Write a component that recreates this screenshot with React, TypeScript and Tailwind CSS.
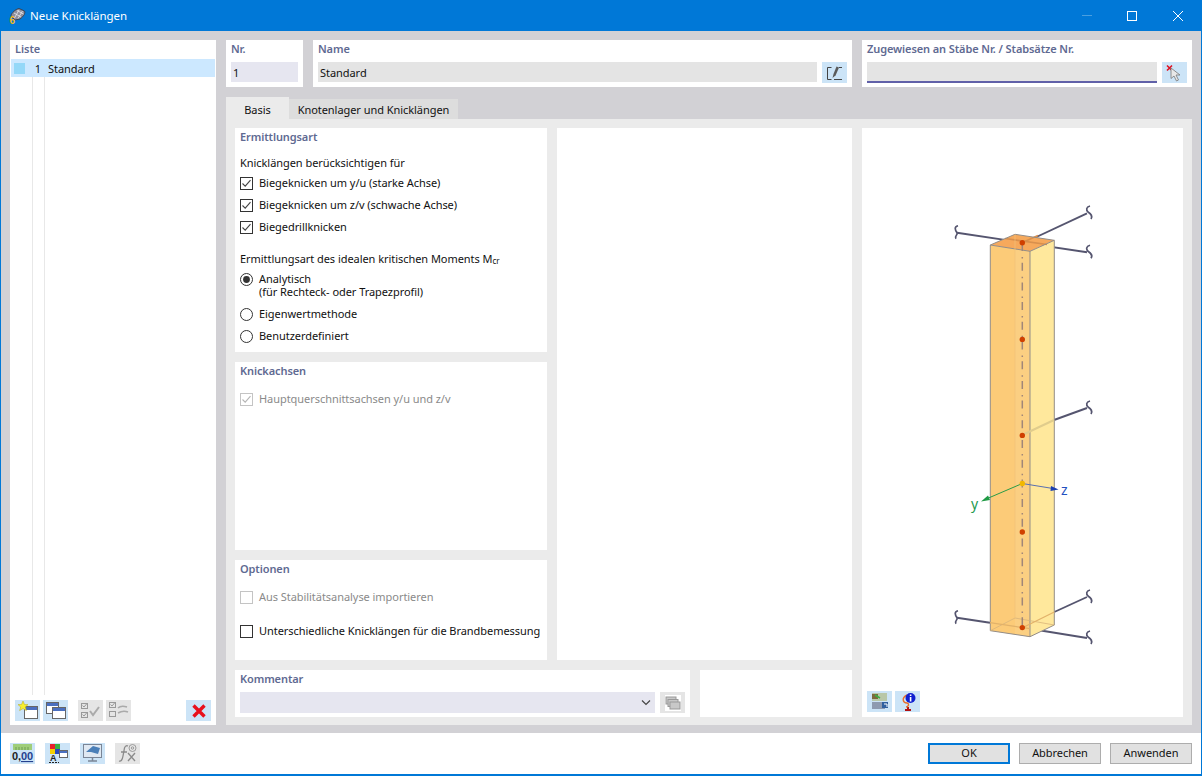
import React from "react";

const font = "font-['Noto_Sans',sans-serif]";

const IconBtn = ({ children, off, className = "" }: { children?: React.ReactNode; off?: boolean; className?: string }) => (
  <div className={`w-[25px] h-[21px] flex items-center justify-center shrink-0 ${off ? "bg-[#e5e5e5]" : "bg-[#cce4f7]"} ${className}`}>
    {children}
  </div>
);

const Title = ({ children }: { children: React.ReactNode }) => (
  <div className="h-[18px] flex items-center px-[5px] font-semibold text-[#5f6a92] whitespace-nowrap tracking-[-0.1px]">{children}</div>
);

const Box = ({ checked, off }: { checked?: boolean; off?: boolean }) => (
  <svg width="13" height="13" viewBox="0 0 13 13" className="shrink-0">
    <rect x="0.5" y="0.5" width="12" height="12" fill="#fff" stroke={off ? "#c4c4c4" : "#333"} />
    {checked && <path d="M2.5 6.5 L5.2 9.2 L10.5 3.2" fill="none" stroke={off ? "#b5b5b5" : "#444"} strokeWidth="1.1" />}
  </svg>
);

const Radio = ({ checked }: { checked?: boolean }) => (
  <svg width="13" height="13" viewBox="0 0 13 13" className="shrink-0">
    <circle cx="6.5" cy="6.5" r="6" fill="#fff" stroke="#333" />
    {checked && <circle cx="6.5" cy="6.5" r="3.4" fill="#333" />}
  </svg>
);

const Row = ({ children, box, off, className = "" }: { children: React.ReactNode; box: React.ReactNode; off?: boolean; className?: string }) => (
  <div className={`h-[22px] flex items-center gap-[6px] pl-[5px] ${off ? "text-[#8a8a8a]" : "text-[#111]"} ${className}`}>
    {box}
    <span className="whitespace-nowrap">{children}</span>
  </div>
);

const NewIcon = () => (
  <svg width="22" height="19" viewBox="0 0 22 19">
    <rect x="7.5" y="5.5" width="13" height="12" fill="#fff" stroke="#666" />
    <rect x="8" y="6" width="12" height="3" fill="#4a6fc0" />
    <path d="M6 0 L7.5 3.5 L11 3.6 L8.3 6 L9.4 9.6 L6 7.6 L2.6 9.6 L3.7 6 L1 3.6 L4.5 3.5Z" fill="#f7ee2e" stroke="#b5a820" strokeWidth="0.5" />
  </svg>
);
const CopyIcon = () => (
  <svg width="22" height="19" viewBox="0 0 22 19">
    <rect x="1.5" y="1.5" width="12" height="11" fill="#fff" stroke="#666" />
    <rect x="2" y="2" width="11" height="3" fill="#4a6fc0" />
    <rect x="7.5" y="6.5" width="13" height="11" fill="#fff" stroke="#666" />
    <rect x="8" y="7" width="12" height="3" fill="#4a6fc0" />
  </svg>
);
const CheckAllIcon = () => (
  <svg width="22" height="19" viewBox="0 0 22 19" fill="none" stroke="#999">
    <rect x="1.5" y="2.5" width="6" height="5" />
    <rect x="1.5" y="11.5" width="6" height="5" />
    <path d="M2.5 4.5 L4 6 L7 2.5 M2.5 13.5 L4 15 L7 11.5" />
    <path d="M10 10 L13 14 L19 6" strokeWidth="2" stroke="#aaa" />
  </svg>
);
const CheckSwapIcon = () => (
  <svg width="22" height="19" viewBox="0 0 22 19" fill="none" stroke="#999">
    <rect x="1.5" y="1.5" width="6" height="5" />
    <rect x="1.5" y="10.5" width="6" height="5" />
    <path d="M2.5 3.5 L4 5 L7 1.5" />
    <path d="M10 7 Q13 4 19 6 M10 12 Q15 9 20 11" strokeWidth="1.6" stroke="#aaa" />
  </svg>
);
const DeleteIcon = () => (
  <svg width="16" height="16" viewBox="0 0 16 16">
    <path d="M2.5 2.5 L13.5 13.5 M13.5 2.5 L2.5 13.5" stroke="#e8101c" strokeWidth="3.4" />
  </svg>
);
const EditIcon = () => (
  <svg width="18" height="16" viewBox="0 0 18 16" fill="none">
    <path d="M5.5 2.5 H1.5 V14.5 H5.5 M8 14.5 H16" stroke="#444" strokeWidth="1" />
    <path d="M13 2.5 H16" stroke="#444" strokeWidth="1" />
    <path d="M6.5 13 L7.5 9 L10.5 1.5 L13 2.5 L9.5 10.5Z" fill="#5a5a5a" />
  </svg>
);
const PickIcon = () => (
  <svg width="18" height="18" viewBox="0 0 18 18">
    <path d="M1 1.5 L6 6.5 M6 1.5 L1 6.5" stroke="#e01020" strokeWidth="1.6" />
    <path d="M5 4 L5 14.5 L8 12 L10.5 17 L12.5 16 L10 11 L14 11Z" fill="#e8e8e8" stroke="#777" strokeWidth="0.8" />
  </svg>
);
const UnitsIcon = () => (
  <svg width="23" height="20" viewBox="0 0 23 20">
    <rect x="2" y="1" width="19" height="6" fill="#9fce7a" />
    <path d="M5 4V7 M8 4V7 M11 4V7 M14 4V7 M17 4V7" stroke="#6e9e52" />
    <text x="1" y="17" fontSize="11" fontWeight="700" fontFamily="Liberation Sans" fill="#222">0,</text>
    <text x="10" y="17" fontSize="11" fontWeight="700" fontFamily="Liberation Sans" fill="#24418f" textDecoration="underline">00</text>
  </svg>
);
const ColorsIcon = () => (
  <svg width="23" height="20" viewBox="0 0 23 20">
    <rect x="4" y="1" width="5" height="5" fill="#e8202c" />
    <rect x="9" y="1" width="5" height="5" fill="#3cb043" />
    <rect x="4" y="6" width="5" height="5" fill="#f5d000" />
    <rect x="9" y="6" width="5" height="5" fill="#2848c0" />
    <rect x="13.5" y="7.5" width="8" height="7" fill="#fff" stroke="#666" />
    <rect x="14" y="8" width="7" height="2" fill="#4a6fc0" />
    <text x="4" y="18" fontSize="9" fontWeight="700" fontFamily="Liberation Sans" fill="#222">A</text>
    <path d="M3 19.5 H13" stroke="#222" strokeDasharray="2 1" />
  </svg>
);
const ScreenIcon = () => (
  <svg width="23" height="20" viewBox="0 0 23 20">
    <rect x="2.5" y="1.5" width="18" height="13" fill="#dfe8f2" stroke="#7a8596" />
    <path d="M5 9 L12 3 L19 5 L17 11 L10 9Z" fill="#4a7fb8" />
    <path d="M11.5 14.5 V17.5 M7 18 H16" stroke="#7a8596" strokeWidth="1.5" />
  </svg>
);
const FxIcon = () => (
  <svg width="23" height="20" viewBox="0 0 23 20" fill="none" stroke="#8a8a8a">
    <path d="M3 18 Q6 19 7 13 L8.5 5 Q9.5 2 12 3 M5 9 H11" strokeWidth="1.3" />
    <path d="M12 10 L19 18 M19 10 L12 18" strokeWidth="1.3" />
    <circle cx="16.5" cy="5" r="3.5" strokeWidth="0.8" />
    <circle cx="16.5" cy="5" r="1.2" strokeWidth="0.8" />
  </svg>
);
const ViewIcon = () => (
  <svg width="22" height="19" viewBox="0 0 22 19">
    <rect x="3" y="1" width="15" height="8" fill="#b9c7a8" />
    <rect x="3" y="2" width="6" height="5" fill="#7c6a3c" />
    <path d="M6 3 L11 6" stroke="#3cb043" strokeWidth="1.5" />
    <rect x="3" y="10" width="13" height="7" fill="#8e9ab0" />
    <rect x="13" y="10" width="6" height="6" fill="#2f5f9e" />
    <path d="M15 12 H18 V15" stroke="#fff" fill="none" />
  </svg>
);
const InfoIcon = () => (
  <svg width="22" height="19" viewBox="0 0 22 19">
    <path d="M8 18 H14 M11 18 V15" stroke="#b01010" strokeWidth="2" />
    <path d="M10 3 C4 6 6 11 10 11 C13 12 11 15 9 15" fill="none" stroke="#e8702c" strokeWidth="1.4" />
    <circle cx="13.5" cy="6" r="5" fill="#1020d0" />
    <rect x="12.8" y="2.5" width="1.6" height="1.5" fill="#fff" />
    <rect x="12.8" y="5" width="1.6" height="4.5" fill="#fff" />
  </svg>
);
const AppIcon = () => (
  <svg width="17" height="16" viewBox="0 0 17 16">
    <path d="M2 8 C2 5 7 1 10 0.5 L15.5 3 C16.5 5 15 8 11 11 L6 12Z" fill="#8f8f9c" stroke="#33333d" strokeWidth="0.8" />
    <path d="M5 5 L12 9 M8 2.5 L14.5 6 M5.5 10 L10 2 M9 10.5 L13.5 3" stroke="#e8e8ee" strokeWidth="0.8" />
    <text x="0.5" y="15.5" fontSize="10" fontWeight="700" fontFamily="Liberation Sans" fill="#f0b820">6</text>
  </svg>
);

const BraceRight = ({ x, y }: { x: number; y: number }) => (
  <path
    d={`M${x + 3} ${y - 7} C${x - 1} ${y - 6} ${x - 1} ${y - 3} ${x + 1} ${y - 1} C${x + 4} ${y + 1} ${x + 6} ${y + 3} ${x + 4} ${y + 6}`}
    fill="none"
    stroke="#55556f"
    strokeWidth="1.7"
  />
);
const BraceLeft = ({ x, y }: { x: number; y: number }) => (
  <path
    d={`M${x + 1} ${y - 7} C${x - 3} ${y - 6} ${x - 2} ${y - 3} ${x} ${y} C${x + 1} ${y + 3} ${x - 3} ${y + 3} ${x - 1} ${y + 6}`}
    fill="none"
    stroke="#55556f"
    strokeWidth="1.7"
  />
);

const ColumnFigure = () => (
  <svg width="321" height="560" viewBox="862 128 321 560" className="block">
    {/* auflager hinten */}
    <path d="M1030 240 L1087 213.3" stroke="#55556f" strokeWidth="1.9" />
    <BraceRight x={1087} y={213} />
    <path d="M957 232.7 L1087 252.3" stroke="#55556f" strokeWidth="1.9" />
    <BraceLeft x={957} y={232.7} />
    <BraceRight x={1087} y={252.3} />
    <path d="M1054 420 L1087 408" stroke="#55556f" strokeWidth="1.9" />
    <BraceRight x={1087} y={408} />
    <path d="M1054.3 612 L1087 597" stroke="#55556f" strokeWidth="1.9" />
    <BraceRight x={1087} y={597} />
    <path d="M957 617.7 L990 622.7 M1030 628.7 L1087 638" stroke="#55556f" strokeWidth="1.9" />
    <BraceLeft x={957} y={617.7} />
    <BraceRight x={1087} y={638} />
    {/* stab */}
    <path d="M990.3 245 L1030 251.3 V636.7 L990.3 630.7Z" fill="#fccb78" />
    <path d="M1015 248 L1030 251.3 V636.7 L1015 634Z" fill="#fbcf82" />
    <path d="M1030 251.3 L1054.3 240.3 V625 L1030 636.7Z" fill="#ffe89c" />
    <path d="M990.3 245 L1015 234.3 L1054.3 240.3 L1030 251.3Z" fill="#f6a95c" />
    <path d="M1005 238.5 L1047 244.5 M1022 242.7 L1038 235.5" stroke="#d8904e" strokeWidth="1.6" />
    <path d="M990.3 245 L1015 234.3 L1054.3 240.3 L1030 251.3Z M990.3 245 V630.7 L1030 636.7 L1054.3 625 V240.3 M1030 251.3 V636.7" fill="none" stroke="#938d88" strokeWidth="1" />
    <path d="M990.3 630.7 L1015 618 L1054.3 625" fill="none" stroke="#d8b47a" strokeWidth="0.8" />
    <path d="M1015 234.3 V618" stroke="#f0c078" strokeWidth="0.7" />
    <path d="M1022.3 435 L1054 420" stroke="#e0cc8c" strokeWidth="2" />
    <path d="M990 622.7 L1030 628.7 M1022 628 L1054.3 612" stroke="#e2b26a" strokeWidth="1.3" />
    <path d="M1022.3 243 V628" stroke="#a08678" strokeWidth="1.5" strokeDasharray="8 6 1.5 4.2" />
    <circle cx="1022.3" cy="242.7" r="2.7" fill="#d04000" />
    <circle cx="1022.3" cy="339.4" r="2.7" fill="#d04000" />
    <circle cx="1022.3" cy="435.4" r="2.7" fill="#d04000" />
    <circle cx="1022.3" cy="532" r="2.7" fill="#d04000" />
    <circle cx="1022.3" cy="627.6" r="2.7" fill="#d04000" />
    {/* achsen */}
    <path d="M1022.3 483.5 L985 499.5" stroke="#2a9c48" strokeWidth="1" />
    <path d="M981 501.5 L988 495.5 L990 500Z" fill="#1f9a44" />
    <path d="M1022.3 483.5 L1053 488.5" stroke="#5a70b0" strokeWidth="1" />
    <path d="M1058.5 489.5 L1051 486 L1050.5 491Z" fill="#1a3fb0" />
    <circle cx="1022.3" cy="483.5" r="2.7" fill="#f2b800" />
    <text x="971" y="509" fontSize="14" fill="#1f9a50" fontFamily="Noto Sans">y</text>
    <text x="1061" y="495" fontSize="14" fill="#2250c0" fontFamily="Noto Sans">z</text>
  </svg>
);

const App = () => {
  return (
    <div className={`${font} w-[1202px] h-[776px] flex flex-col bg-white border border-t-0 border-[#0078d7] border-b-2 text-[11px] tracking-[-0.05px] text-[#111] overflow-hidden`}>
      <div className="h-[31px] bg-[#0078d7] flex items-center -mx-px shrink-0">
        <div className="ml-[9px] mr-[4px]"><AppIcon /></div>
        <span className="text-white text-[11.5px]">Neue Knicklängen</span>
        <div className="ml-auto flex items-center">
          <div className="w-[10px] h-px bg-[#4a9fe0] mr-[35px]" />
          <div className="w-[10px] h-[10px] border border-white mr-[36px]" />
          <svg width="10" height="10" viewBox="0 0 10 10" className="mr-[19px]">
            <path d="M0 0 L10 10 M10 0 L0 10" stroke="#fff" strokeWidth="1" />
          </svg>
        </div>
      </div>

      <div className="h-[702px] bg-[#d2d1d5] flex gap-[10px] pt-[9px] pl-[9px] pr-[9px] shrink-0">
        {/* Liste */}
        <div className="w-[206px] h-[685px] bg-white flex flex-col shrink-0">
          <div className="h-[18px] mb-px flex items-center px-[5px] font-semibold text-[#5f6a92]">Liste</div>
          <div className="mx-px h-[18px] bg-[#cce8ff] flex items-center shrink-0">
            <div className="w-[11px] h-[11px] bg-[#94d8f8] ml-[3px]" />
            <span className="w-[16px] text-right pt-[2px]">1</span>
            <span className="ml-[7px] pt-[2px]">Standard</span>
          </div>
          <div className="flex-1 flex pl-[22px]">
            <div className="w-[13px] h-full border-l border-r border-[#e8e8e8]" />
          </div>
          <div className="h-[30px] flex pt-[5px] pl-[5px] shrink-0 bg-white">
            <IconBtn><NewIcon /></IconBtn>
            <IconBtn className="ml-[3px]"><CopyIcon /></IconBtn>
            <IconBtn off className="ml-[10px]"><CheckAllIcon /></IconBtn>
            <IconBtn off className="ml-[3px]"><CheckSwapIcon /></IconBtn>
            <IconBtn className="ml-[55px]"><DeleteIcon /></IconBtn>
          </div>
        </div>

        <div className="w-[966px] flex flex-col shrink-0">
          {/* kopf */}
          <div className="flex gap-[10px] h-[47px] shrink-0">
            <div className="w-[77px] bg-white">
              <Title>Nr.</Title>
              <div className="mx-[5px] mt-[4px] h-[20px] pt-[2px] bg-[#e6e6f0] flex items-center px-[2px]">1</div>
            </div>
            <div className="w-[539px] bg-white">
              <Title>Name</Title>
              <div className="flex gap-[5px] px-[5px] mt-[4px]">
                <div className="flex-1 h-[20px] pt-[2px] bg-[#e4e4e4] flex items-center px-[2px]">Standard</div>
                <IconBtn><EditIcon /></IconBtn>
              </div>
            </div>
            <div className="w-[330px] bg-white">
              <Title>Zugewiesen an Stäbe Nr. / Stabsätze Nr.</Title>
              <div className="flex gap-[5px] px-[5px] mt-[4px]">
                <div className="flex-1 h-[21px] bg-[#e4e4e4] border-b-2 border-[#6060a8]" />
                <IconBtn><PickIcon /></IconBtn>
              </div>
            </div>
          </div>

          {/* tabs */}
          <div className="flex items-end h-[22px] mt-[10px] shrink-0">
            <div className="w-[63px] h-[22px] pt-[4px] bg-[#ebebeb] flex items-center justify-center">Basis</div>
            <div className="w-[169px] h-[20px] pt-[2px] bg-[#dddddd] flex items-center justify-center whitespace-nowrap">Knotenlager und Knicklängen</div>
          </div>

          <div className="h-[606px] bg-[#ebebeb] flex gap-[10px] pt-[9px] pl-[9px] pr-[9px] shrink-0">
            <div className="w-[617px] flex flex-col gap-[10px]">
              <div className="flex gap-[10px] h-[532px]">
                <div className="w-[312px] flex flex-col gap-[10px]">
                  <div className="h-[224px] bg-white">
                    <Title>Ermittlungsart</Title>
                    <div className="h-[18px] mt-[8px] flex items-center px-[5px]">Knicklängen berücksichtigen für</div>
                    <Row box={<Box checked />}>Biegeknicken um y/u (starke Achse)</Row>
                    <Row box={<Box checked />}>Biegeknicken um z/v (schwache Achse)</Row>
                    <Row box={<Box checked />}>Biegedrillknicken</Row>
                    <div className="h-[18px] mt-[12px] flex items-center px-[5px] whitespace-nowrap">
                      Ermittlungsart des idealen kritischen Moments M<sub className="text-[8px] leading-none">cr</sub>
                    </div>
                    <div className="mt-[4px] h-[31px] flex gap-[6px] pl-[5px] leading-[13px]">
                      <div className="pt-[1px]"><Radio checked /></div>
                      <span>Analytisch<br />(für Rechteck- oder Trapezprofil)</span>
                    </div>
                    <Row box={<Radio />}>Eigenwertmethode</Row>
                    <Row box={<Radio />}>Benutzerdefiniert</Row>
                  </div>
                  <div className="h-[188px] bg-white">
                    <Title>Knickachsen</Title>
                    <Row box={<Box checked off />} off className="mt-[8px]">Hauptquerschnittsachsen y/u und z/v</Row>
                  </div>
                  <div className="h-[100px] bg-white">
                    <Title>Optionen</Title>
                    <Row box={<Box off />} off className="mt-[8px]">Aus Stabilitätsanalyse importieren</Row>
                    <Row box={<Box />} className="mt-[12px]">Unterschiedliche Knicklängen für die Brandbemessung</Row>
                  </div>
                </div>
                <div className="w-[295px] bg-white" />
              </div>
              <div className="flex gap-[10px] h-[47px]">
                <div className="w-[455px] bg-white">
                  <Title>Kommentar</Title>
                  <div className="flex gap-[5px] px-[5px] mt-[4px]">
                    <div className="flex-1 h-[21px] bg-[#e6e6f0] flex items-center justify-end pr-[4px]">
                      <svg width="10" height="6" viewBox="0 0 10 6" fill="none">
                        <path d="M1 0.5 L5 4.5 L9 0.5" stroke="#444" strokeWidth="1.2" />
                      </svg>
                    </div>
                    <IconBtn off>
                      <div className="w-[16px] h-[16px] bg-white flex items-center justify-center">
                        <svg width="16" height="14" viewBox="0 0 16 14">
                          <rect x="1" y="1" width="10" height="7" fill="#c8c8c8" stroke="#999" />
                          <rect x="3" y="3.5" width="10" height="7" fill="#c8c8c8" stroke="#999" />
                          <rect x="5" y="6" width="10" height="7" fill="#c8c8c8" stroke="#999" />
                        </svg>
                      </div>
                    </IconBtn>
                  </div>
                </div>
                <div className="w-[152px] bg-white" />
              </div>
            </div>
            <div className="w-[321px] h-[589px] bg-white flex flex-col">
              <ColumnFigure />
              <div className="flex gap-[3px] pl-[5px] pt-[3px]">
                <IconBtn><ViewIcon /></IconBtn>
                <IconBtn><InfoIcon /></IconBtn>
              </div>
            </div>
          </div>
        </div>
      </div>

      {/* fuss */}
      <div className="flex-1 flex items-center px-[9px] pb-[1px]">
        <IconBtn><UnitsIcon /></IconBtn>
        <IconBtn className="ml-[10px]"><ColorsIcon /></IconBtn>
        <IconBtn className="ml-[10px]"><ScreenIcon /></IconBtn>
        <IconBtn off className="ml-[10px]"><FxIcon /></IconBtn>
        <button className="ml-auto w-[82px] h-[21px] bg-[#e1e1e1] border-2 border-[#0078d7] text-[#111]">OK</button>
        <button className="ml-[9px] w-[82px] h-[21px] bg-[#e1e1e1] border border-[#adadad] text-[#111]">Abbrechen</button>
        <button className="ml-[9px] w-[82px] h-[21px] bg-[#e1e1e1] border border-[#adadad] text-[#111]">Anwenden</button>
      </div>
    </div>
  );
};

export default App;
